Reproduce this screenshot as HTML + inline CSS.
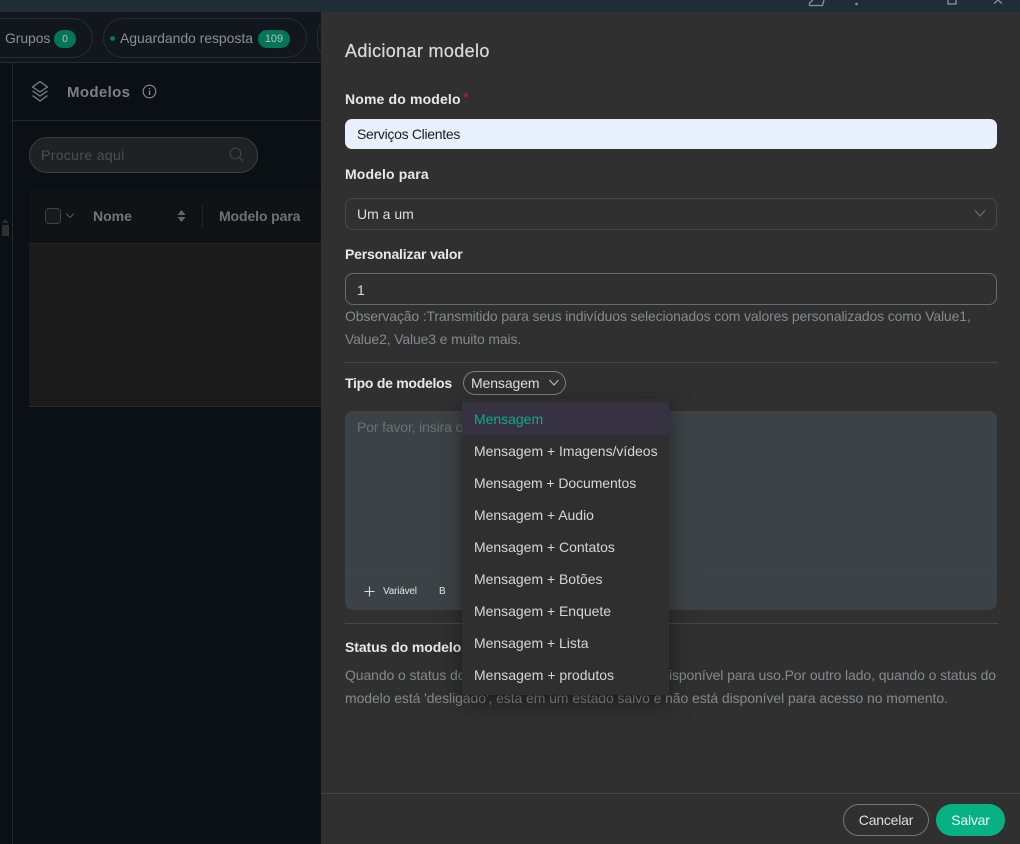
<!DOCTYPE html>
<html lang="pt">
<head>
<meta charset="utf-8">
<title>Adicionar modelo</title>
<style>
html,body{margin:0;padding:0;width:1020px;height:844px;overflow:hidden;background:#0a1014;font-family:"Liberation Sans",sans-serif;}
.a{position:absolute;box-sizing:border-box;white-space:nowrap;}
.t{line-height:20px;font-size:14px;}
.lbl{color:#e8e8e8;font-weight:bold;font-size:14px;line-height:20px;}
.note{color:#85898b;font-size:14px;line-height:20px;}
.opt{left:474px;color:#d6d6d6;font-size:14px;line-height:20px;letter-spacing:-.02px;}
</style>
</head>
<body>
<!-- top bar -->
<div class="a" style="left:0;top:0;width:1020px;height:12px;background:#1f2d37"></div>
<svg class="a" style="left:800px;top:0" width="220" height="12" fill="none" stroke="#8a9299" stroke-width="1.300">
<path d="M13 0L9.500 3V5.500H22.500L24 0"/>
<circle cx="56.500" cy="4" r="1.300" fill="#8a9299" stroke="none"/>
<path d="M148 0V4H156V0M156 2H157"/>
<path d="M194 3.500L198 0M202 3.500L198 0"/>
</svg>

<!-- left background -->
<div class="a" style="left:0;top:12px;width:321px;height:50px;background:#11171c"></div>
<div class="a" style="left:0;top:62px;width:321px;height:1px;background:#2a2e31"></div>
<div class="a" style="left:12px;top:63px;width:1px;height:781px;background:#25292c"></div>

<div class="a" style="left:-20px;top:18px;width:113px;height:40px;border:1px solid #262b2f;border-radius:20px"></div>
<div class="a t" style="left:5px;top:28px;color:#8b8f92;font-size:14px;letter-spacing:-.1px">Grupos</div>
<div class="a" style="left:54px;top:30px;width:22px;height:18px;border-radius:9px;background:#04745a;color:#a7c9be;font-size:10px;line-height:19px;text-align:center">0</div>

<div class="a" style="left:103px;top:18px;width:204px;height:40px;border:1px solid #262b2f;border-radius:20px"></div>
<div class="a" style="left:110px;top:36px;width:5px;height:5px;border-radius:50%;background:#04745a"></div>
<div class="a t" style="left:120px;top:28px;color:#8b8f92;font-size:14px;letter-spacing:-.05px">Aguardando resposta</div>
<div class="a" style="left:258px;top:30px;width:32px;height:18px;border-radius:9px;background:#04745a;color:#a7c9be;font-size:11px;line-height:19px;text-align:center">109</div>
<div class="a" style="left:317px;top:18px;width:30px;height:40px;border:1px solid #262b2f;border-radius:20px"></div>

<!-- header -->
<svg class="a" style="left:30px;top:80px" width="21" height="24" fill="none" stroke="#7d8184" stroke-width="1.300" stroke-linejoin="round">
<path d="M10 1.500L17.500 7L10 12L2.500 7Z"/>
<path d="M2.500 11L10 16L17.500 11"/>
<path d="M2.500 15.500L10 21L17.500 15.500"/>
</svg>
<div class="a" style="left:67px;top:83px;color:#7e8184;font-size:15px;font-weight:bold;line-height:20px;letter-spacing:.35px">Modelos</div>
<svg class="a" style="left:142px;top:84px" width="15" height="15" fill="none" stroke="#8b8e90" stroke-width="1.100">
<circle cx="7.500" cy="7.500" r="6.300"/>
<path d="M7.500 6.500V11" stroke-width="1.300"/>
<circle cx="7.500" cy="4.500" r=".8" fill="#8b8e90" stroke="none"/>
</svg>
<div class="a" style="left:13px;top:120px;width:308px;height:1px;background:#25292c"></div>

<!-- search -->
<div class="a" style="left:29px;top:137px;width:229px;height:36px;border:1px solid #3c3d3e;border-radius:18px;background:#202122"></div>
<div class="a t" style="left:41px;top:145px;color:#4c4e50;font-size:14px;letter-spacing:.35px">Procure aqui</div>
<svg class="a" style="left:229px;top:147px" width="15" height="15" fill="none" stroke="#3f4346" stroke-width="1.200">
<circle cx="6.500" cy="6.500" r="5.300"/><path d="M10.500 10.500L14 14"/>
</svg>

<!-- table -->
<div class="a" style="left:29px;top:190px;width:292px;height:53px;background:#111213"></div>
<div class="a" style="left:29px;top:243px;width:292px;height:164px;background:#1b1b1b;border-top:1px solid #262626;border-bottom:1px solid #2b2b2b"></div>
<div class="a" style="left:45px;top:208px;width:16px;height:16px;border:1px solid #414243;border-radius:4px;background:#18191a"></div>
<svg class="a" style="left:65px;top:212px" width="10" height="8" fill="none" stroke="#55585a" stroke-width="1"><path d="M1 1.500L5 5.500L9 1.500"/></svg>
<div class="a" style="left:93px;top:206px;color:#737577;font-size:14px;font-weight:bold;line-height:20px">Nome</div>
<svg class="a" style="left:177px;top:209px" width="9" height="14" fill="#626466"><path d="M4.500 1L8.500 6H.5Z"/><path d="M4.500 13L8.500 8H.5Z"/></svg>
<div class="a" style="left:202px;top:205px;width:1px;height:23px;background:#212223"></div>
<div class="a" style="left:219px;top:206px;color:#6f7274;font-size:14px;font-weight:bold;line-height:20px;letter-spacing:-.1px">Modelo para</div>

<!-- scrollbar -->
<svg class="a" style="left:1px;top:218px" width="9" height="6" fill="#2a2e31"><path d="M4.500 1L8 5H1Z"/></svg>
<div class="a" style="left:2px;top:225px;width:7px;height:11px;background:#2d3134"></div>

<!-- drawer -->
<div class="a" style="left:321px;top:12px;width:699px;height:832px;background:#303030"></div>
<div class="a" style="left:345px;top:40px;color:#d8d8d8;font-size:18px;line-height:22px;letter-spacing:.35px;-webkit-text-stroke:.25px #d8d8d8">Adicionar modelo</div>

<div class="a lbl" style="left:345px;top:89px;letter-spacing:.15px">Nome do modelo</div>
<div class="a" style="left:463px;top:89px;color:#a8232b;font-size:14px;line-height:16px;font-weight:bold">*</div>
<div class="a" style="left:345px;top:119px;width:652px;height:30px;background:#e8f0fe;border-radius:7px"></div>
<div class="a t" style="left:357px;top:124px;color:#1c1c1c;letter-spacing:-.3px">Serviços Clientes</div>

<div class="a lbl" style="left:345px;top:164px;letter-spacing:.12px">Modelo para</div>
<div class="a" style="left:345px;top:198px;width:652px;height:32px;border:1px solid #474747;border-radius:8px"></div>
<div class="a t" style="left:357px;top:204px;color:#dedede">Um a um</div>
<svg class="a" style="left:974px;top:209px" width="12" height="9" fill="none" stroke="#6e6e6e" stroke-width="1.100"><path d="M1 1.500L6 7L11 1.500"/></svg>

<div class="a lbl" style="left:345px;top:244px;letter-spacing:-.17px">Personalizar valor</div>
<div class="a" style="left:345px;top:273px;width:652px;height:32px;border:1px solid #6a6a6a;border-radius:8px"></div>
<div class="a t" style="left:357px;top:280px;color:#dedede">1</div>
<div class="a note" style="left:345px;top:306px;letter-spacing:-.145px">Observação :Transmitido para seus indivíduos selecionados com valores personalizados como Value1,</div>
<div class="a note" style="left:345px;top:329px;letter-spacing:-.14px">Value2, Value3 e muito mais.</div>
<div class="a" style="left:345px;top:362px;width:653px;height:1px;background:#474747"></div>

<div class="a lbl" style="left:345px;top:373px;letter-spacing:-.27px">Tipo de modelos</div>
<div class="a" style="left:463px;top:371px;width:103px;height:24px;border:1px solid #7d7d7d;border-radius:12px"></div>
<div class="a t" style="left:471px;top:373px;color:#dedede;letter-spacing:-.1px">Mensagem</div>
<svg class="a" style="left:548px;top:379px" width="12" height="8" fill="none" stroke="#bdbdbd" stroke-width="1.100"><path d="M1.500 1L6 6L10.500 1"/></svg>

<!-- editor -->
<div class="a" style="left:345px;top:411px;width:652px;height:199px;background:#3c4245;border-radius:8px"></div>
<div class="a" style="left:345px;top:574px;width:652px;height:1px;background:#3f4548"></div>
<div class="a t" style="left:357px;top:417px;color:#6c7173;letter-spacing:-.15px">Por favor, insira o</div>
<svg class="a" style="left:364px;top:586px" width="11" height="11" fill="none" stroke="#dcdcdc" stroke-width="1.100"><path d="M5.500 .5V10.500M.5 5.500H10.500"/></svg>
<div class="a" style="left:383px;top:585px;color:#e4e4e4;font-size:10px;line-height:14px;letter-spacing:-.2px">Variável</div>
<div class="a" style="left:439px;top:585px;color:#e4e4e4;font-size:10px;line-height:14px">B</div>

<div class="a" style="left:345px;top:623px;width:653px;height:1px;background:#474747"></div>
<div class="a lbl" style="left:345px;top:637px;letter-spacing:-.08px">Status do modelo</div>
<div class="a note" style="left:345px;top:665px;letter-spacing:-.1px">Quando o status do modelo</div>
<div class="a note" style="right:24px;top:665px;letter-spacing:-.1px">disponível para uso.Por outro lado, quando o status do</div>
<div class="a note" style="left:345px;top:688px;letter-spacing:-.085px">modelo está 'desligado', está em um estado salvo e não está disponível para acesso no momento.</div>

<!-- dropdown -->
<div class="a" style="left:462px;top:399px;width:207px;height:296px;background:#2f2f2f;box-shadow:0 9px 28px rgba(0,0,0,.2),0 6px 16px rgba(0,0,0,.16),0 3px 6px rgba(0,0,0,.12)"></div>
<div class="a" style="left:462px;top:403px;width:207px;height:32px;background:#373241"></div>
<div class="a opt" style="top:409px;color:#08ad82">Mensagem</div>
<div class="a opt" style="top:441px">Mensagem + Imagens/vídeos</div>
<div class="a opt" style="top:473px;letter-spacing:-.08px">Mensagem + Documentos</div>
<div class="a opt" style="top:505px">Mensagem + Audio</div>
<div class="a opt" style="top:537px">Mensagem + Contatos</div>
<div class="a opt" style="top:569px">Mensagem + Botões</div>
<div class="a opt" style="top:601px">Mensagem + Enquete</div>
<div class="a opt" style="top:633px">Mensagem + Lista</div>
<div class="a opt" style="top:665px;letter-spacing:.02px">Mensagem + produtos</div>

<!-- footer -->
<div class="a" style="left:321px;top:793px;width:699px;height:1px;background:#444"></div>
<div class="a" style="left:843px;top:804px;width:86px;height:32px;border:1px solid #777;border-radius:16px;color:#dedede;font-size:14px;line-height:30px;text-align:center;letter-spacing:-.2px">Cancelar</div>
<div class="a" style="left:936px;top:804px;width:69px;height:32px;border-radius:16px;background:#08b183;color:#eafaf5;font-size:14px;line-height:32px;text-align:center;letter-spacing:-.2px">Salvar</div>
</body>
</html>
